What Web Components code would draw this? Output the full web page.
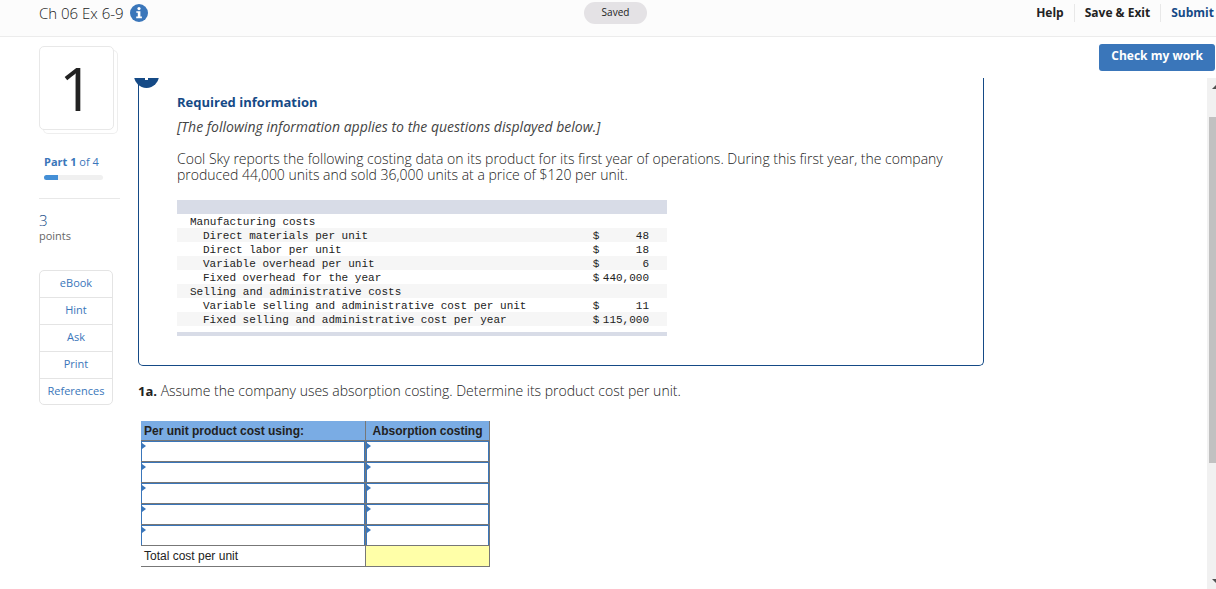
<!DOCTYPE html>
<html lang="en">
<head>
<meta charset="utf-8">
<title>Ch 06 Ex 6-9</title>
<style>
  html, body { height: 100%; margin: 0; }
  body {
    background: #fff;
    color: #222;
    font: 14px/16px "Open Sans", "Liberation Sans", sans-serif;
  }
</style>
</head>
<body>
<quiz-app></quiz-app>

<script>
const define = (name, html, setup) => {
  const template = document.createElement('template');
  template.innerHTML = html;

  customElements.define(name, class extends HTMLElement {
    constructor() {
      super();
      this.attachShadow({mode: 'open'});
      this.shadowRoot.appendChild(template.content.cloneNode(true));
    }

    connectedCallback() {
      if (setup) setup(this, this.shadowRoot);
    }
  });
};

// Top bar: title, save state, actions
define('quiz-header', `
  <style>
    :host {
      display: grid;
      grid-template-columns: 1fr auto 1fr;
      align-items: start;
      height: 36px;
      padding-left: 15px;
      background: #fcfcfc;
      border-bottom: 1px solid #ececec;
    }
    .title { display: flex; align-items: center; gap: 6px; padding: 4px 0 0 24px; }
    h1 { margin: 0; font-size: 15px; line-height: 18px; font-weight: 300; }
    .info { display: block; padding: 0; border: 0; background: none; }
    svg { display: block; }
    .saved {
      margin-top: 2px;
      padding: 0 18px 2px;
      border-radius: 11px;
      background: #e4e2e5;
      font-size: 10px;
      line-height: 20px;
    }
    nav { display: flex; justify-content: flex-end; padding-top: 4px; }
    a {
      padding: 0 10px;
      font-size: 12px;
      line-height: 18px;
      font-weight: 700;
      color: #222;
      text-decoration: none;
      border-left: 1px solid #e8e8e8;
    }
    a:first-child { border-left: 0; }
    a:last-child { padding-right: 2px; color: #154a86; }
  </style>
  <div class="title">
    <h1>Ch 06 Ex 6-9</h1>
    <button class="info" aria-label="Assignment information">
      <svg width="18" height="18" viewBox="0 0 18 18">
        <circle cx="9" cy="9" r="9" fill="#3a76ba"/>
        <circle cx="9" cy="4.6" r="1.6" fill="#fff"/>
        <path d="M6.300 7.200h4.100v5.400h1.500v1.600H6.200v-1.600h1.600V8.800H6.300z" fill="#fff"/>
      </svg>
    </button>
  </div>
  <div class="saved">Saved</div>
  <nav>
    <a href="#">Help</a>
    <a href="#">Save &amp; Exit</a>
    <a href="#">Submit</a>
  </nav>
`);

// Question number on a small stack of two cards
define('question-number', `
  <style>
    :host { display: block; width: 79px; height: 88px; }
    .card {
      width: 73px;
      height: 82px;
      border: 1px solid #e8e8e8;
      border-radius: 5px;
      background: #fff;
      box-shadow: 4px 4px 0 -1px #fff, 4px 4px 0 0 #eee;
      font-size: 60px;
      line-height: 82px;
      text-align: center;
    }
  </style>
  <div class="card"><slot></slot></div>
`);

define('quiz-sidebar', `
  <style>
    :host { display: block; padding: 9px 0 0 39px; width: 81px; }
    .part { margin: 20px 0 0 5px; width: 59px; font-size: 11px; color: #3a76ba; white-space: nowrap; }
    .bar { height: 5px; margin-top: 5px; border-radius: 3px; background: #f0f0f0; overflow: hidden; }
    .bar div { width: 24%; height: 100%; background: #448fd6; }
    hr { margin: 18px 0 0; border: 0; border-top: 1px solid #e8e8e8; }
    .score { margin: 13px 0 0; color: #154a86; font-size: 15px; font-weight: 300; }
    .points { font-size: 11px; color: #666; }
    nav { width: 72px; margin-top: 26px; border: 1px solid #e4e4e4; border-radius: 5px; }
    a {
      display: block;
      padding-bottom: 2px;
      font-size: 11px;
      line-height: 24px;
      text-align: center;
      text-decoration: none;
      color: #3a76ba;
    }
    a + a { border-top: 1px solid #e4e4e4; }
    a:last-child { padding-bottom: 1px; }
  </style>
  <question-number>1</question-number>
  <div class="part"><b>Part 1</b> of 4
    <div class="bar"><div></div></div>
  </div>
  <hr>
  <div class="score">3</div>
  <div class="points">points</div>
  <nav>
    <a href="#">eBook</a>
    <a href="#">Hint</a>
    <a href="#">Ask</a>
    <a href="#">Print</a>
    <a href="#">References</a>
  </nav>
`);

// Outlined box with a badge on its corner
define('required-info', `
  <style>
    :host {
      display: block;
      position: relative;
      padding: 16px 38px 29px;
      border: 1px solid #154a86;
      border-top: 0;
      border-radius: 0 0 5px 5px;
    }
    .badge { position: absolute; left: -5px; top: -15px; }
    h2 { margin: 0; font-size: 13px; line-height: 16px; color: #154a86; }
  </style>
  <svg class="badge" width="25" height="25" viewBox="0 0 25 25">
    <circle cx="12.5" cy="12.5" r="12.5" fill="#154a86"/>
    <path d="M11 5h3l-.5 7h-2zM11 14h3v3h-3z" fill="#fff"/>
  </svg>
  <h2><slot name="heading"></slot></h2>
  <slot></slot>
`);

define('cost-table', `
  <style>
    :host { display: block; width: 490px; }
    table {
      width: 100%;
      border-collapse: collapse;
      border-top: 14px solid #d8dce7;
      font: 11px/12px "Liberation Mono", monospace;
    }
    td { padding: 2px 0 0; }
    td:first-child { padding-left: 13px; }
    tr.sub td:first-child { padding-left: 26px; }
    td:nth-child(2) { width: 10px; }
    td:nth-child(3) { width: 46px; padding-right: 18px; text-align: right; }
    tr { height: 14px; }
    tr:nth-child(even) { background: #f6f6f6; }
    .end { margin-top: 6px; height: 4px; background: #d8dce7; }
  </style>
  <table><tbody></tbody></table>
  <div class="end"></div>
`, (el, root) => {
  const rows = [
    ['Manufacturing costs'],
    ['Direct materials per unit', '48'],
    ['Direct labor per unit', '18'],
    ['Variable overhead per unit', '6'],
    ['Fixed overhead for the year', '440,000'],
    ['Selling and administrative costs'],
    ['Variable selling and administrative cost per unit', '11'],
    ['Fixed selling and administrative cost per year', '115,000']
  ];
  root.querySelector('tbody').innerHTML = rows.map(([label, value]) => value
    ? `<tr class="sub"><td>${label}</td><td>$</td><td>${value}</td></tr>`
    : `<tr><td>${label}</td><td></td><td></td></tr>`
  ).join('');
});

define('answer-table', `
  <style>
    :host { display: block; width: 349px; }
    table {
      width: 100%;
      table-layout: fixed;
      border-collapse: separate;
      border-spacing: 0;
      font: 12px/18px "Liberation Sans", Arial, sans-serif;
    }
    th, td { box-sizing: border-box; padding: 0; height: 21px; border-right: 1px solid #777; border-bottom: 1px solid #777; }
    th:first-child { width: 225px; padding-left: 3px; text-align: left; }
    thead th { height: 20px; background: #7aace4; }
    tfoot th { font-weight: 400; }
    tfoot td { background: #ffffa8; }
    input {
      display: block;
      box-sizing: border-box;
      width: 100%;
      height: 20px;
      padding: 0 8px;
      border: solid #3a76ba;
      border-width: 1px 1px 0;
      border-radius: 0;
      outline: 0;
      font: inherit;
      background: #fff url("data:image/svg+xml,%3Csvg xmlns='http://www.w3.org/2000/svg' width='4' height='6'%3E%3Cpath d='M0 0 4 3 0 6z' fill='%233a76ba'/%3E%3C/svg%3E") 0 1px no-repeat;
    }
  </style>
  <table>
    <thead><tr><th>Per unit product cost using:</th><th>Absorption costing</th></tr></thead>
    <tbody></tbody>
    <tfoot><tr><th>Total cost per unit</th><td></td></tr></tfoot>
  </table>
`, (el, root) => {
  const body = root.querySelector('tbody');
  for (let i = 1; i <= 5; i++) {
    body.insertAdjacentHTML('beforeend', `
      <tr>
        <td><input aria-label="Cost item ${i}"></td>
        <td><input aria-label="Amount ${i}"></td>
      </tr>`);
  }
});

define('scroll-rail', `
  <style>
    :host {
      display: flex;
      flex-direction: column;
      width: 9px;
      overflow: hidden;
      background: #f1f1f1;
    }
    .thumb { flex: 345; margin-left: 2px; background: #c1c1c1; }
    .rest { flex: 109; }
    svg { display: block; flex: none; }
  </style>
  <svg width="9" height="39" viewBox="0 0 9 39"><path d="M5 11 9 7V11z" fill="#505050"/></svg>
  <div class="thumb"></div>
  <div class="rest"></div>
  <svg width="9" height="17" viewBox="0 0 9 17"><path d="M5 7H9V11z" fill="#505050"/></svg>
`);

define('quiz-app', `
  <style>
    :host { display: flex; flex-direction: column; height: 100%; overflow: hidden; }
    quiz-header { flex: none; }
    .body { flex: 1; display: flex; min-height: 0; }
    .main { flex: 1; display: flex; flex-direction: column; min-width: 0; }
    .toolbar { display: flex; justify-content: flex-end; padding: 7px 1px 7px 0; }
    .check {
      height: 27px;
      padding: 0 12px 3px;
      border: 0;
      border-radius: 3px;
      background: #3a76ba;
      color: #fff;
      font: 700 12px/18px "Open Sans", sans-serif;
    }
    .pane { flex: 1; display: flex; min-height: 0; overflow: hidden; }
    .content { flex: 1; padding: 0 223px 0 18px; }
    p { margin: 0; font-weight: 300; }
    .note { margin-top: 9px; font-style: italic; font-weight: 400; color: #444; }
    .text { margin-top: 16px; }
    cost-table { margin-top: 17px; }
    .question { margin: 17px 0 22px; }
    .question b { font-size: 13px; font-weight: 700; }
    answer-table { margin-left: 3px; }
  </style>
  <quiz-header></quiz-header>
  <div class="body">
    <quiz-sidebar></quiz-sidebar>
    <div class="main">
      <div class="toolbar"><button class="check">Check my work</button></div>
      <div class="pane">
        <div class="content">
          <required-info>
            <span slot="heading">Required information</span>
            <p class="note">[The following information applies to the questions displayed below.]</p>
            <p class="text">Cool Sky reports the following costing data on its product for its first year of operations. During this first year, the company produced 44,000 units and sold 36,000 units at a price of $120 per unit.</p>
            <cost-table></cost-table>
          </required-info>
          <p class="question"><b>1a.</b> Assume the company uses absorption costing. Determine its product cost per unit.</p>
          <answer-table></answer-table>
        </div>
        <scroll-rail></scroll-rail>
      </div>
    </div>
  </div>
`);
</script>
</body>
</html>
